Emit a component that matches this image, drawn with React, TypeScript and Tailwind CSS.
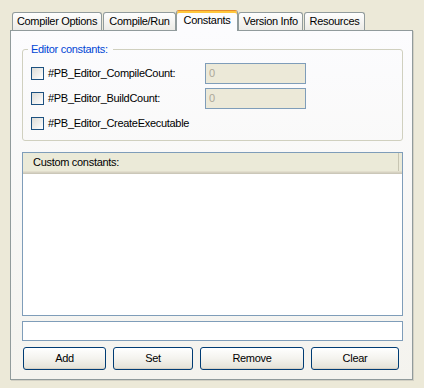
import React from 'react'

// XP-style "Constants" page of the compiler options dialog
const tabs = [
  { label: 'Compiler Options', w: 'w-[90px]', ml: 'ml-[2px]' },
  { label: 'Compile/Run', w: 'w-[73px]', ml: 'ml-[1px]' },
  { label: 'Constants', w: 'w-[62px]', ml: '', active: true },
  { label: 'Version Info', w: 'w-[65px]', ml: '' },
  { label: 'Resources', w: 'w-[61px]', ml: 'ml-[1px]' },
]

const constants = [
  { label: '#PB_Editor_CompileCount:', value: '0' },
  { label: '#PB_Editor_BuildCount:', value: '0' },
  { label: '#PB_Editor_CreateExecutable' },
]

const buttons = [
  { label: 'Add', w: 'w-[83px]' },
  { label: 'Set', w: 'w-[80px]' },
  { label: 'Remove', w: 'w-[104px]' },
  { label: 'Clear', w: 'w-[88px]' },
]

function Tab({ label, w, ml, active }: { label: string; w: string; ml: string; active?: boolean }) {
  if (active) {
    return (
      <div
        className={`${w} ${ml} relative z-10 mb-[-1px] flex h-[21px] items-center justify-center rounded-t-[3px] border-x border-t border-x-[#919B9C] border-t-[#E68B2C] bg-[#FCFCFE] pb-[2px] shadow-[inset_0_2px_0_#FFC73C]`}
      >
        {label}
      </div>
    )
  }
  return (
    <div
      className={`${w} ${ml} flex h-[18px] items-center justify-center rounded-t-[3px] border-x border-t border-[#919B9C] bg-linear-to-b from-[#FEFEFE] to-[#ECEBE6]`}
    >
      {label}
    </div>
  )
}

function Checkbox() {
  return (
    <span className="box-border inline-block h-[13px] w-[13px] shrink-0 border border-[#1C5180] bg-linear-to-br from-[#DCDCD7] to-[#FFFFFF]" />
  )
}

function XPButton({ label, w }: { label: string; w: string }) {
  return (
    <button
      className={`${w} h-[23px] rounded-[3px] border border-[#003C74] bg-linear-to-b from-[#FFFFFF] via-[#F4F3EE] to-[#E3E1D6] text-black shadow-[inset_0_-1px_0_#D6D0C5]`}
    >
      {label}
    </button>
  )
}

export default function App() {
  return (
    <div className="h-[388px] w-[424px] bg-[#ECE9D8] pl-[10px] pt-[10px] font-['Tahoma','Liberation_Sans',Arial,sans-serif] text-[11px] leading-[13px] tracking-[-0.3px] text-black">
      <div className="flex h-[20px] items-end">
        {tabs.map((t) => (
          <Tab key={t.label} {...t} />
        ))}
      </div>

      <div className="box-border flex h-[350px] w-[403px] flex-col border border-[#919B9C] bg-linear-to-b from-[#FCFCFE] to-[#F4F3EE] pl-[11px] pr-[9px] shadow-[1px_1px_0_#D2D0C4]">
        <fieldset className="mt-[12px] w-[381px] rounded-[3px] border border-[#D0D0BF] pb-[6px] pl-[8px] pt-[7px]">
          <legend className="ml-[-3px] pl-[3px] pr-[5px] text-[#0046D5]">Editor constants:</legend>
          <div className="flex flex-col gap-[4px]">
            {constants.map((c) => (
              <div key={c.label} className="flex h-[21px] items-center">
                <div className="flex w-[174px] items-center">
                  <Checkbox />
                  <span className="ml-[4px] whitespace-nowrap">{c.label}</span>
                </div>
                {c.value !== undefined && (
                  <div className="box-border flex h-[21px] w-[101px] items-center border border-[#7F9DB9] bg-[#ECE9D8] pl-[3px] text-[#ACA899]">
                    {c.value}
                  </div>
                )}
              </div>
            ))}
          </div>
        </fieldset>

        <div className="mt-[11px] box-border flex h-[164px] w-[381px] flex-col border border-[#7F9DB9] bg-white">
          <div className="flex h-[21px] bg-[#EBEAD8] shadow-[inset_0_-1px_0_#CBC7B8,inset_0_-2px_0_#D6D2C2,inset_0_-3px_0_#E2DECD]">
            <div className="h-[18px] w-[376px] border-r border-[#C7C5B2] pl-[10px] leading-[18px]">
              Custom constants:
            </div>
          </div>
        </div>

        <div className="mt-[5px] box-border h-[20px] w-[381px] border border-[#7F9DB9] bg-white" />

        <div className="ml-[1px] mt-[6px] flex gap-[7px]">
          {buttons.map((b) => (
            <XPButton key={b.label} {...b} />
          ))}
        </div>
      </div>
    </div>
  )
}
